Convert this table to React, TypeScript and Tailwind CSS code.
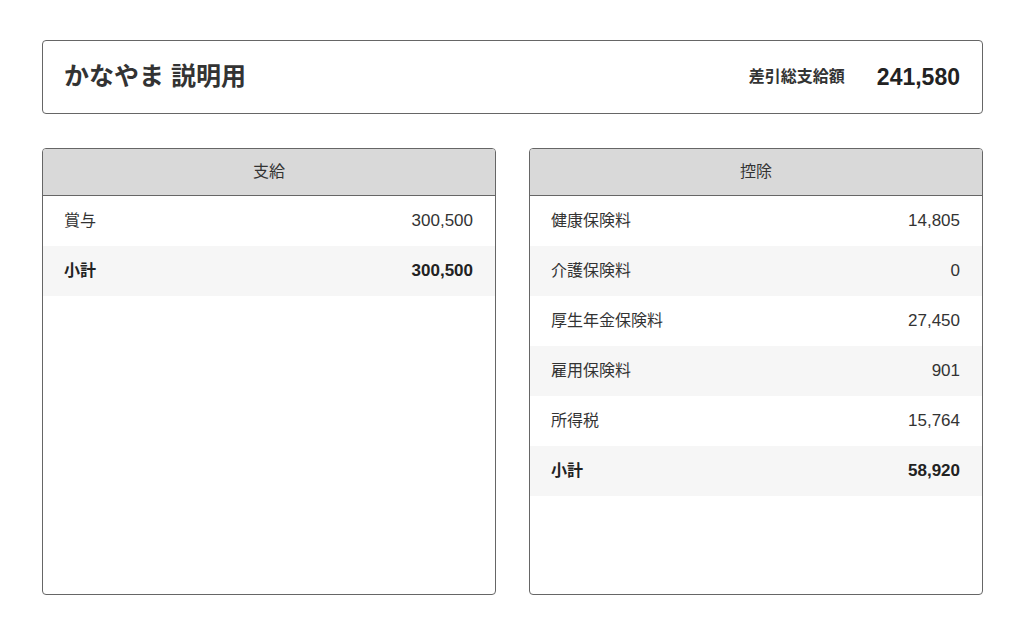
import React from "react";

interface Row {
    label: string;
    value: string;
    total?: boolean;
}

const payments: Row[] = [
    { label: "賞与", value: "300,500" },
    { label: "小計", value: "300,500", total: true },
];

const deductions: Row[] = [
    { label: "健康保険料", value: "14,805" },
    { label: "介護保険料", value: "0" },
    { label: "厚生年金保険料", value: "27,450" },
    { label: "雇用保険料", value: "901" },
    { label: "所得税", value: "15,764" },
    { label: "小計", value: "58,920", total: true },
];

function Panel({ title, rows }: { title: string; rows: Row[] }) {
    return (
        <div className="flex-1 h-[447px] border border-[#666] rounded-[4px] overflow-hidden bg-white">
            <div className="h-[47px] bg-[#d9d9d9] border-b border-[#666] flex items-center justify-center text-[16px] text-[#333]">
                {title}
            </div>
            {rows.map((row, i) => (
                <div
                    key={row.label}
                    className={`h-[50px] flex items-center justify-between pl-[21px] pr-[22px] text-[16px] ${
                        i % 2 === 1 ? "bg-[#f6f6f6]" : "bg-white"
                    } ${row.total ? "font-bold text-[#222]" : "text-[#333]"}`}
                >
                    <span>{row.label}</span>
                    <span className="text-[17px]">{row.value}</span>
                </div>
            ))}
        </div>
    );
}

export default function App() {
    return (
        <div
            className="w-[1024px] h-[637px] bg-white pl-[42px] pr-[41px] pt-[40px]"
            style={{ fontFamily: '"Liberation Sans", "Noto Sans CJK JP", sans-serif' }}
        >
            <div className="h-[74px] border border-[#666] rounded-[4px] flex items-center justify-between pl-[21px] pr-[22px]">
                <h1 className="text-[25px] font-bold text-[#333]">かなやま 説明用</h1>
                <div className="flex items-center gap-[32px]">
                    <span className="text-[16px] font-bold text-[#333]">差引総支給額</span>
                    <span className="text-[23px] font-bold text-[#222]">241,580</span>
                </div>
            </div>

            <div className="flex gap-[33px] mt-[34px]">
                <Panel title="支給" rows={payments} />
                <Panel title="控除" rows={deductions} />
            </div>
        </div>
    );
}
